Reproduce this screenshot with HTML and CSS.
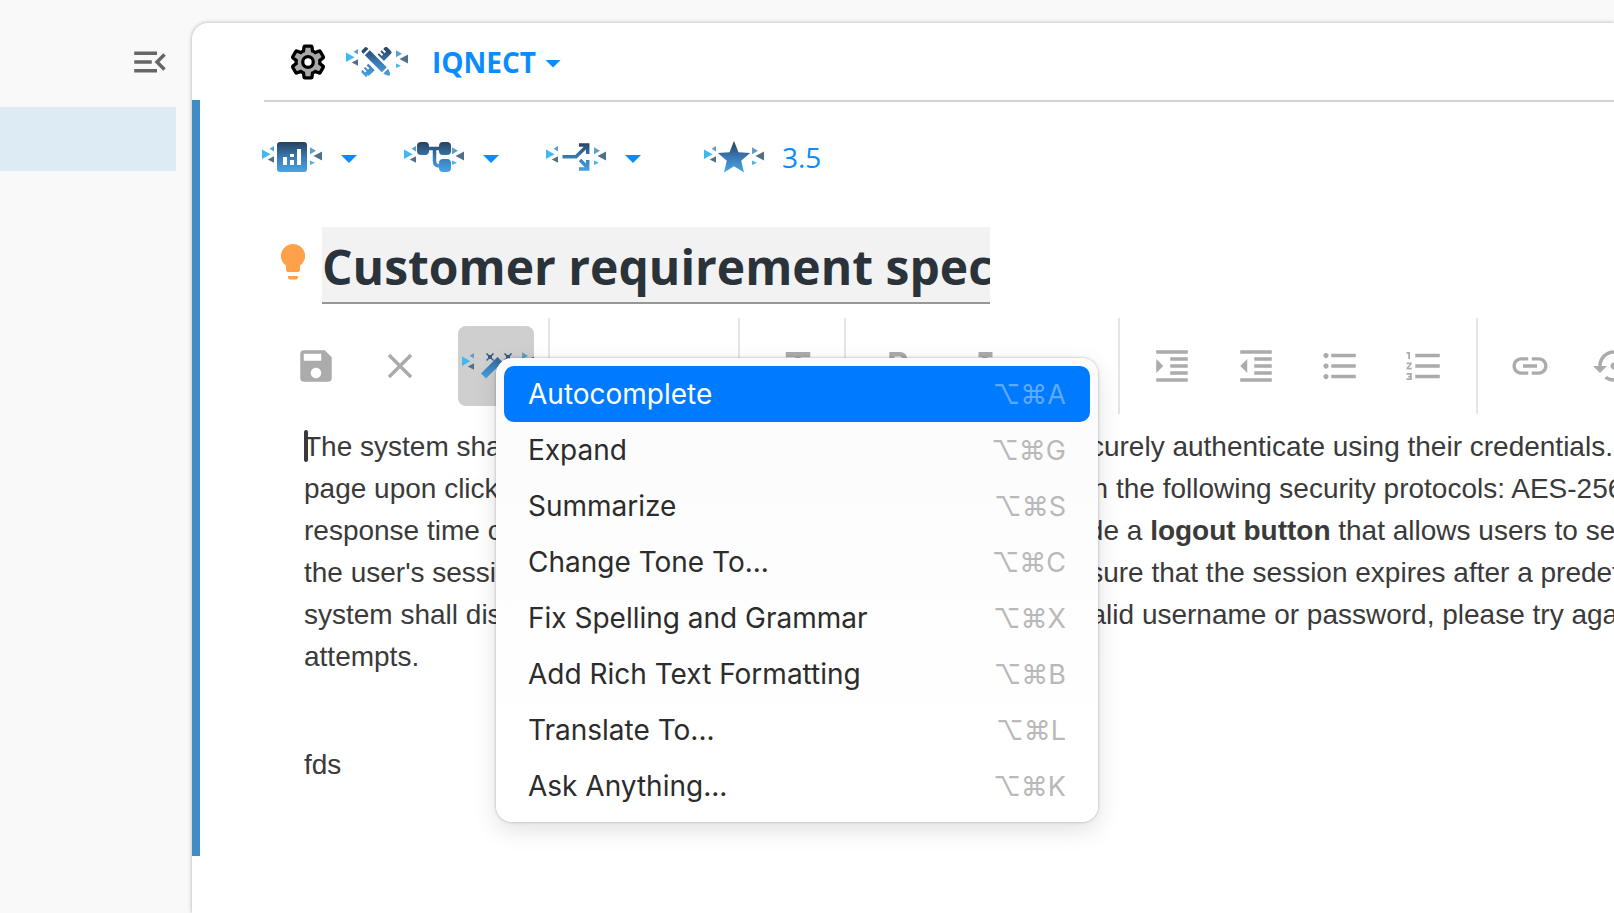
FILE: index.html
```html
<!DOCTYPE html>
<html lang="en">
<head>
    <meta charset="UTF-8">
    <meta name="viewport" content="width=device-width, initial-scale=1.0">
    <title>IQNECT</title>
    <link rel="stylesheet" href="styles.css">
</head>
<body>

    <!-- shared icon parts -->
    <svg class="defs" width="0" height="0" aria-hidden="true">
        <defs>
            <linearGradient id="blue" gradientUnits="userSpaceOnUse" x1="0" y1="0" x2="0" y2="30">
                <stop offset="0" stop-color="#26425c"/>
                <stop offset="0.5" stop-color="#3a78b4"/>
                <stop offset="1" stop-color="#45a5e6"/>
            </linearGradient>
            <g id="flank-left">
                <path fill="#3fb9ef" d="M0 7.5L8.5 12.3L0 17z"/>
                <path fill="#5b9fca" d="M12 4v5.5L7.5 6.8z"/>
                <path fill="#50708a" d="M12 14.3v6.5L5.7 17.6z"/>
            </g>
            <g id="flank-right">
                <path fill="#5b9fca" d="M0 5.2L6 8.7L0 12.2z"/>
                <path fill="#50708a" d="M12 9.5v9L3.5 14z"/>
                <path fill="#3fb9ef" d="M0 18.5L5 20.8L0 23z"/>
            </g>
            <mask id="tools-mask">
                <g fill="#fff" transform="translate(30.5 15)">
                    <g transform="rotate(-45)">
                        <path d="M-18 4.500V-2.500q0-2 2-2h.5v4h2v-4h2v4h2v-4h2.500v9h-7q-2 0-2-2z"/>
                        <path d="M6 4.500v-9h2v4h2v-4h2v4h2v-4h2q2 0 2 2v5q0 2-2 2z"/>
                    </g>
                    <g transform="rotate(45)">
                        <path d="M-15 -3.500v7h-2q-1.500 0-1.500-1.500v-4q0-1.500 1.500-1.500z"/>
                        <path d="M-13 -3.500h24v7h-24z"/>
                        <path d="M13 -3.500l5 2q1.500 1.500 0 3l-5 2z"/>
                    </g>
                </g>
            </mask>
            <mask id="wand-mask">
                <path stroke="#fff" stroke-width="7" d="M21.500 27L38 10.500"/>
                <g stroke="#fff" stroke-width="1.500" fill="none">
                    <path d="M24.500 4.500l7 7M31.500 4.500l-7 7M42.500 4.500l7 7M49.500 4.500l-7 7M42.500 20.500l7 7M49.500 20.500l-7 7"/>
                </g>
                <path fill="#fff" d="M26 6h4v4h-4zM44 6h4v4h-4zM44 22h4v4h-4z"/>
            </mask>
        </defs>
    </svg>

    <div class="app">
        <aside class="sidebar">
            <button class="collapse" type="button" aria-label="Collapse menu">
                <svg width="42" height="42" viewBox="0 0 24 24" fill="#666"><path d="M3 18h13v-2H3v2zM3 13h10v-2H3v2zm0-7v2h13V6H3zm18 9.590L17.420 12 21 8.410 19.590 7l-5 5 5 5L21 15.590z"/></svg>
            </button>
            <div class="sidebar-item"></div>
        </aside>

        <main class="panel">
            <header class="header">
                <button class="icon-button" type="button" aria-label="Settings">
                    <svg width="38" height="38" viewBox="0 0 23 23" fill="#a9a9a9" stroke="#000" stroke-width="2"><g transform="translate(-.5 -.5)"><path d="M19.140 12.940c.04-.3.06-.61.06-.94 0-.32-.02-.64-.07-.94l2.030-1.580c.18-.14.23-.41.12-.61l-1.920-3.320c-.12-.22-.37-.29-.59-.22l-2.390.96c-.5-.38-1.030-.7-1.620-.94l-.36-2.540c-.04-.24-.24-.41-.48-.41h-3.840c-.24 0-.43.17-.47.41l-.36 2.540c-.59.24-1.130.57-1.620.94l-2.390-.96c-.22-.08-.47 0-.59.22L2.740 8.870c-.12.21-.08.47.12.61l2.030 1.580c-.05.3-.09.63-.09.94s.02.64.07.94l-2.030 1.580c-.18.14-.23.41-.12.61l1.920 3.320c.12.22.37.29.59.22l2.390-.96c.5.38 1.030.7 1.620.94l.36 2.540c.05.24.24.41.48.41h3.840c.24 0 .44-.17.47-.41l.36-2.540c.59-.24 1.130-.56 1.620-.94l2.390.96c.22.08.47 0 .59-.22l1.920-3.320c.12-.22.07-.47-.12-.61l-2.010-1.580z"/><circle cx="12" cy="12" r="3.200" fill="#fff"/></g></svg>
                </button>
                <button class="project" type="button">
                    <svg class="project-icon" width="62" height="30" viewBox="0 0 62 30">
                        <use href="#flank-left" y="-2"/>
                        <rect width="62" height="30" fill="url(#blue)" mask="url(#tools-mask)"/>
                        <use href="#flank-right" x="50" y="-2"/>
                    </svg>
                    <span>IQNECT</span>
                    <span class="caret"></span>
                </button>
            </header>

            <section class="requirement">
                <hr class="rule">

                <div class="metrics">
                    <button class="metric" type="button" aria-label="Analytics">
                        <svg width="60" height="30" viewBox="0 0 60 30">
                            <use href="#flank-left"/>
                            <rect x="15" width="30" height="30" rx="3" fill="url(#blue)"/>
                            <path fill="#fff" d="M21 15h4v8h-4zM28 12h4v3h-4zM28 18h4v5h-4zM35 7h4v16h-4z"/>
                            <use href="#flank-right" x="48"/>
                        </svg>
                        <span class="caret"></span>
                    </button>
                    <button class="metric" type="button" aria-label="Structure">
                        <svg width="60" height="30" viewBox="0 0 60 30">
                            <use href="#flank-left"/>
                            <use href="#flank-right" x="48"/>
                            <path fill="none" stroke="url(#blue)" stroke-width="3.500" d="M24 6.600L36 6.500M30.500 7v12q0 5 5 5h2"/>
                            <rect x="13" width="12" height="13" rx="4" fill="url(#blue)"/>
                            <rect x="35" width="12" height="13" rx="4" fill="url(#blue)"/>
                            <rect x="35" y="17" width="12" height="13" rx="4" fill="url(#blue)"/>
                        </svg>
                        <span class="caret"></span>
                    </button>
                    <button class="metric" type="button" aria-label="Branches">
                        <svg width="60" height="30" viewBox="0 0 60 30">
                            <use href="#flank-left"/>
                            <use href="#flank-right" x="48"/>
                            <g fill="none" stroke="url(#blue)" stroke-width="3.500">
                                <path d="M16.500 14.800H30L42 3M33 3.100h8.700V12"/>
                                <path d="M34 18l8 8M33 26.900h8.700V18"/>
                            </g>
                        </svg>
                        <span class="caret"></span>
                    </button>
                    <div class="rating">
                        <svg width="60" height="30" viewBox="0 0 60 30">
                            <use href="#flank-left"/>
                            <use href="#flank-right" x="48"/>
                            <path fill="url(#blue)" d="M30-1l4.500 11.200 11.700.8-9 7.700L40 30.500l-10-6.300-10 6.300 2.800-11.800-9-7.700 11.700-.8z"/>
                        </svg>
                        <span>3.5</span>
                    </div>
                </div>

                <div class="title-row">
                    <svg class="bulb" width="24" height="36" viewBox="0 0 24 36" fill="#ffa04a"><path d="M12 0a12 12 0 0 1 7 21.800V26q0 2-2 2H7q-2 0-2-2v-4.200A12 12 0 0 1 12 0zM7 32h10v1.500q0 2-2 2H9q-2 0-2-2z"/></svg>
                    <input class="title" type="text" aria-label="Title" value="Customer requirement spec">
                </div>

                <div class="toolbar">
                    <button class="tool" type="button" aria-label="Save">
                        <svg viewBox="0 0 24 24"><path d="M17 3H5c-1.110 0-2 .9-2 2v14c0 1.100.89 2 2 2h14c1.100 0 2-.9 2-2V7l-4-4zm-5 16c-1.660 0-3-1.340-3-3s1.340-3 3-3 3 1.340 3 3-1.340 3-3 3zm3-10H5V5h10v4z"/></svg>
                    </button>
                    <button class="tool" type="button" aria-label="Cancel">
                        <svg viewBox="0 0 24 24"><path d="M19 6.410L17.590 5 12 10.590 6.410 5 5 6.410 10.590 12 5 17.590 6.410 19 12 13.410 17.590 19 19 17.590 13.410 12z"/></svg>
                    </button>
                    <div class="assistant">
                        <button class="assistant-button" type="button" aria-label="Assistant" aria-expanded="true">
                            <svg width="72" height="30" viewBox="0 0 72 30">
                                <use href="#flank-left"/>
                                <rect width="72" height="30" fill="url(#blue)" mask="url(#wand-mask)"/>
                                <use href="#flank-right" x="60" y="-2"/>
                            </svg>
                        </button>
                        <div class="menu" role="menu">
                            <button class="menu-item active" type="button" role="menuitem">Autocomplete <kbd>⌥⌘A</kbd></button>
                            <button class="menu-item" type="button" role="menuitem">Expand <kbd>⌥⌘G</kbd></button>
                            <button class="menu-item" type="button" role="menuitem">Summarize <kbd>⌥⌘S</kbd></button>
                            <button class="menu-item" type="button" role="menuitem">Change Tone To... <kbd>⌥⌘C</kbd></button>
                            <button class="menu-item" type="button" role="menuitem">Fix Spelling and Grammar <kbd>⌥⌘X</kbd></button>
                            <button class="menu-item" type="button" role="menuitem">Add Rich Text Formatting <kbd>⌥⌘B</kbd></button>
                            <button class="menu-item" type="button" role="menuitem">Translate To... <kbd>⌥⌘L</kbd></button>
                            <button class="menu-item" type="button" role="menuitem">Ask Anything... <kbd>⌥⌘K</kbd></button>
                        </div>
                    </div>
                    <span class="separator"></span>
                    <span class="style-slot"></span>
                    <span class="separator"></span>
                    <button class="tool text-style" type="button" aria-label="Text style">
                        <svg viewBox="0 0 24 24"><path d="M5 4v3h5.500v12h3V7H19V4z"/></svg>
                    </button>
                    <span class="separator"></span>
                    <button class="tool" type="button" aria-label="Bold">
                        <svg viewBox="0 0 24 24"><path d="M15.600 10.790c.97-.67 1.650-1.770 1.650-2.790 0-2.260-1.750-4-4-4H7v14h7.040c2.090 0 3.710-1.700 3.710-3.790 0-1.520-.86-2.820-2.150-3.420zM10 6.500h3c.83 0 1.500.67 1.500 1.500s-.67 1.500-1.500 1.500h-3v-3zm3.500 9H10v-3h3.500c.83 0 1.500.67 1.500 1.500s-.67 1.500-1.500 1.500z"/></svg>
                    </button>
                    <button class="tool" type="button" aria-label="Italic">
                        <svg viewBox="0 0 24 24"><path d="M10 4v3h2.210l-3.420 8H6v3h8v-3h-2.210l3.420-8H18V4z"/></svg>
                    </button>
                    <button class="tool" type="button" aria-label="More">
                        <svg viewBox="0 0 24 24"><path d="M6 10a2 2 0 1 0 0 4 2 2 0 0 0 0-4zm12 0a2 2 0 1 0 0 4 2 2 0 0 0 0-4zm-6 0a2 2 0 1 0 0 4 2 2 0 0 0 0-4z"/></svg>
                    </button>
                    <span class="separator"></span>
                    <button class="tool" type="button" aria-label="Increase indent">
                        <svg viewBox="0 0 24 24"><path d="M3 21h18v-2H3v2zM3 8v8l4-4-4-4zm8 9h10v-2H11v2zM3 3v2h18V3H3zm8 6h10V7H11v2zm0 4h10v-2H11v2z"/></svg>
                    </button>
                    <button class="tool" type="button" aria-label="Decrease indent">
                        <svg viewBox="0 0 24 24"><path d="M11 17h10v-2H11v2zm-8-5l4 4V8l-4 4zm0 9h18v-2H3v2zM3 3v2h18V3H3zm8 6h10V7H11v2zm0 4h10v-2H11v2z"/></svg>
                    </button>
                    <button class="tool" type="button" aria-label="Bulleted list">
                        <svg viewBox="0 0 24 24"><path d="M4 10.500c-.83 0-1.500.67-1.500 1.500s.67 1.500 1.500 1.500 1.500-.67 1.500-1.500-.67-1.500-1.500-1.500zm0-6c-.83 0-1.500.67-1.500 1.500S3.170 7.500 4 7.500 5.500 6.830 5.500 6 4.830 4.500 4 4.500zm0 12c-.83 0-1.500.68-1.500 1.500s.68 1.500 1.500 1.500 1.500-.68 1.500-1.500-.67-1.500-1.500-1.500zM7 19h14v-2H7v2zm0-6h14v-2H7v2zm0-8v2h14V5H7z"/></svg>
                    </button>
                    <button class="tool" type="button" aria-label="Numbered list">
                        <svg viewBox="0 0 24 24"><path d="M2 17h2v.5H3v1h1v.5H2v1h3v-4H2v1zm1-9h1V4H2v1h1v3zm-1 3h1.800L2 13.100v.9h3v-1H3.200L5 10.900V10H2v1zm5-6v2h14V5H7zm0 14h14v-2H7v2zm0-6h14v-2H7v2z"/></svg>
                    </button>
                    <span class="separator"></span>
                    <button class="tool" type="button" aria-label="Insert link">
                        <svg viewBox="0 0 24 24"><path d="M3.900 12c0-1.710 1.390-3.100 3.100-3.100h4V7H7c-2.760 0-5 2.240-5 5s2.240 5 5 5h4v-1.900H7c-1.710 0-3.100-1.390-3.100-3.100zM8 13h8v-2H8v2zm9-6h-4v1.900h4c1.710 0 3.100 1.390 3.100 3.100s-1.390 3.100-3.100 3.100h-4V17h4c2.760 0 5-2.240 5-5s-2.240-5-5-5z"/></svg>
                    </button>
                    <button class="tool" type="button" aria-label="History">
                        <svg viewBox="0 0 24 24"><path d="M14 12c0-1.100-.9-2-2-2s-2 .9-2 2 .9 2 2 2 2-.9 2-2zm-2-9c-4.970 0-9 4.030-9 9H0l4 4 4-4H5c0-3.870 3.130-7 7-7s7 3.130 7 7-3.130 7-7 7c-1.510 0-2.910-.49-4.060-1.300l-1.420 1.440C8.040 20.300 9.940 21 12 21c4.970 0 9-4.030 9-9s-4.030-9-9-9z"/></svg>
                    </button>
                </div>

                <div class="editor">
                    <span class="text-cursor"></span>
                    <p>The system shall allow all registered users to log in and then securely authenticate using their credentials.<br>
                    page upon clicking the blue button. The system shall comply with the following security protocols: AES-256<br>
                    response time of less than two seconds. The system shall provide a <strong>logout button</strong> that allows users to securely<br>
                    the user's session and redirect user to the next page. It shall ensure that the session expires after a predefined<br>
                    system shall display an error message when the input fails: "Invalid username or password, please try again<br>
                    attempts.</p>
                    <p>fds</p>
                </div>
            </section>
        </main>
    </div>

</body>
</html>
```
FILE: styles.css
```css
* {
    box-sizing: border-box;
}

body {
    margin: 0;
    font-family: 'Open Sans', sans-serif;
    font-size: 28px;
    background-color: #f9f9f9;
    color: #3a3a3a;
}

button {
    padding: 0;
    border: 0;
    background: none;
    font: inherit;
    color: inherit;
    cursor: pointer;
}

svg {
    display: block;
    flex: none;
    overflow: visible;
}

.defs {
    position: absolute;
}

.app {
    display: flex;
    min-height: 100vh;
    overflow: hidden;
}

/* sidebar */
.sidebar {
    flex: none;
    width: 192px;
    padding: 41px 16px 0 0;
}

.collapse {
    display: block;
    margin: 0 5px 24px auto;
}

.sidebar-item {
    height: 64px;
    background-color: #ddebf4;
}

/* main panel */
.panel {
    flex: 1;
    min-width: 0;
    margin-top: 23px;
    background-color: #fff;
    border-top-left-radius: 16px;
    box-shadow: 0 0 4px rgba(0, 0, 0, 0.3);
}

.header {
    display: flex;
    align-items: center;
    height: 77px;
    padding-left: 97px;
}

.project {
    display: flex;
    align-items: center;
    margin-left: 19px;
    font-weight: bold;
    color: #0a8cff;
}

.project-icon {
    margin-right: 24px;
}

.caret {
    width: 16px;
    height: 8px;
    background-color: #0a8cff;
    clip-path: polygon(0 0, 100% 0, 50% 100%);
}

.project .caret {
    margin: 4px 0 0 9px;
}

.requirement {
    padding: 0 0 70px 62px;
    border-left: 8px solid #3f8dc4;
}

.rule {
    height: 2px;
    margin: 0 0 0 2px;
    border: 0;
    background-color: #d3d3d3;
}

.metrics {
    display: flex;
    align-items: center;
    height: 30px;
    margin-top: 40px;
}

.metric {
    display: flex;
    align-items: center;
    gap: 19px;
    margin-right: 47px;
}

.metric .caret {
    margin-top: 4px;
}

.rating {
    display: flex;
    align-items: center;
    gap: 18px;
    margin-left: 16px;
    color: #0a8cff;
}

.title-row {
    display: flex;
    align-items: flex-start;
    gap: 17px;
    margin-top: 55px;
    padding-left: 19px;
}

.bulb {
    margin-top: 17px;
}

.title {
    width: 668px;
    height: 77px;
    padding: 4px 0 0;
    border: 0;
    border-bottom: 2px solid #979797;
    border-radius: 0;
    outline: 0;
    background-color: #f2f2f2;
    font-family: inherit;
    font-size: 48px;
    font-weight: bold;
    color: #2b333a;
}

/* editor toolbar */
.toolbar {
    display: flex;
    align-items: center;
    height: 96px;
    margin-top: 14px;
    padding-left: 12px;
}

.tool {
    display: flex;
    flex: none;
    align-items: center;
    justify-content: center;
    width: 84px;
    height: 84px;
}

.tool.text-style {
    padding-left: 12px;
}

.tool svg {
    width: 42px;
    height: 42px;
    fill: #ababab;
}

.separator {
    flex: none;
    width: 2px;
    height: 96px;
    margin: 0 10px;
    background-color: #e5e5e5;
}

.style-slot {
    flex: none;
    width: 168px;
}

.assistant {
    position: relative;
    flex: none;
    margin: 0 4px 0 16px;
}

.assistant-button {
    display: flex;
    justify-content: center;
    width: 76px;
    height: 80px;
    padding: 23px 0 0 4px;
    border-radius: 8px;
    background-color: #cfcfcf;
}

/* assistant menu */
.menu {
    position: absolute;
    top: 32px;
    left: 38px;
    z-index: 1;
    width: 602px;
    padding: 8px;
    border-radius: 16px;
    background: linear-gradient(#fbfbfb, #fff 85%);
    box-shadow: 0 0 3px rgba(0, 0, 0, 0.3), 0 8px 24px rgba(0, 0, 0, 0.12);
}

.menu-item {
    display: flex;
    align-items: center;
    justify-content: space-between;
    width: 100%;
    height: 56px;
    padding: 0 24px;
    border-radius: 10px;
    font-family: Inter, sans-serif;
    font-size: 28px;
    color: #2c2c2c;
}

.menu-item kbd {
    font: inherit;
    font-size: 27px;
    color: #b9b9b9;
}

.menu-item.active {
    background-color: #007aff;
    color: #fff;
}

.menu-item.active kbd {
    color: #5fa9fb;
}

/* editor text */
.editor {
    position: relative;
    padding: 12px 0 0 42px;
    font-family: 'Liberation Sans', Arial, sans-serif;
    line-height: 42px;
    white-space: nowrap;
}

.editor p {
    margin: 0 0 66px;
}

.editor p:last-child {
    margin-bottom: 0;
}

.text-cursor {
    position: absolute;
    top: 16px;
    left: 42px;
    width: 4px;
    height: 32px;
    border-radius: 2px;
    background-color: #3a3a3a;
}
```
